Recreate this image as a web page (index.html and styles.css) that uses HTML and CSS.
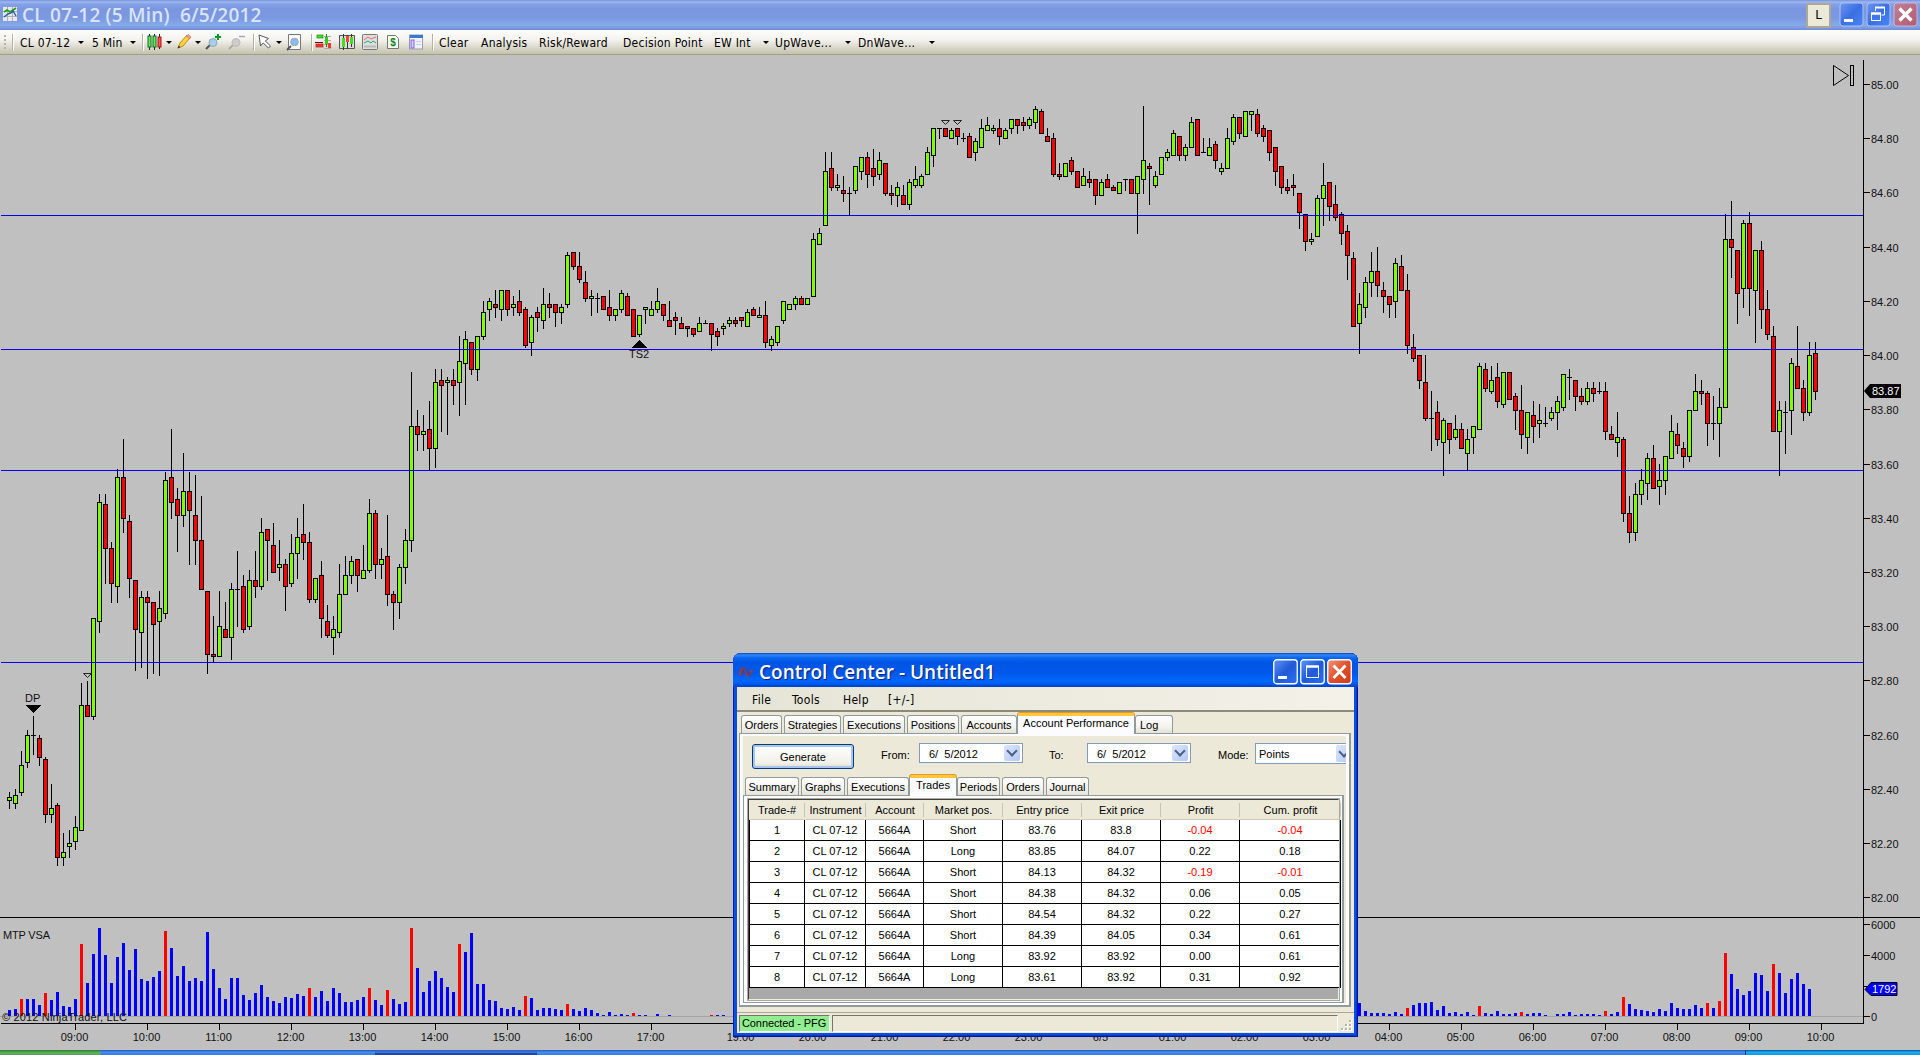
FILE: index.html
```html
<!DOCTYPE html>
<html lang="en">
<head>
<meta charset="utf-8">
<title>CL 07-12 (5 Min)  6/5/2012</title>
<link rel="stylesheet" href="styles.css">
</head>
<body>
<header class="titlebar">
  <svg class="title-icon" width="14" height="14" viewBox="0 0 14 14"><rect width="14" height="14" fill="#e8e8ec"/><path d="M0 4.5h14M0 9.5h14M4.5 0v14M9.5 0v14" stroke="#b0b0b8"/><path d="M1 5l3-2 3 2 3-2 3-2" stroke="#20a010" stroke-width="1.6" fill="none"/><path d="M1 10l4-3 3-1 2-2 3 5" stroke="#2860a0" stroke-width="1.4" fill="none"/></svg>
  <h1 class="title">CL 07-12 (5 Min)&nbsp; 6/5/2012</h1>
  <span class="link-btn">L</span>
  <svg class="caption-btns" width="81" height="26" viewBox="0 0 81 26">
    <defs><linearGradient id="cb" x1="0" y1="0" x2="1" y2="1"><stop offset="0" stop-color="#6f96f0"/><stop offset=".5" stop-color="#3a6fe4"/><stop offset="1" stop-color="#4a86f4"/></linearGradient>
    <linearGradient id="cx" x1="0" y1="0" x2="1" y2="1"><stop offset="0" stop-color="#c08098"/><stop offset="1" stop-color="#b05c70"/></linearGradient></defs>
    <rect x="1" y="1" width="23" height="23" rx="3" fill="url(#cb)" stroke="#a9c2f2"/><rect x="5" y="17" width="9" height="3" fill="#fff"/>
    <rect x="28" y="1" width="23" height="23" rx="3" fill="url(#cb)" stroke="#a9c2f2"/><path d="M36.500 9V5.500h9v7.500h-3" fill="none" stroke="#fff"/><path d="M36 5.500h10" stroke="#fff" stroke-width="2"/><rect x="32.500" y="11.500" width="9" height="7" fill="#4478e8" stroke="#fff"/><path d="M32 11.500h10" stroke="#fff" stroke-width="2.500"/>
    <rect x="55" y="1" width="23" height="23" rx="3" fill="url(#cx)" stroke="#c9b4dc"/><path d="M60.500 6.500l12 12M72.500 6.500l-12 12" stroke="#fff" stroke-width="3.200"/>
  </svg>
</header>
<nav class="toolbar">
  <span class="grip"></span><i class="sep"></i><span>CL 07-12</span><i class="arr"></i><span>5 Min</span><i class="arr"></i><i class="sep"></i>
  <svg width="16" height="16" viewBox="0 0 16 16"><path d="M2.500 0v16M7.500 0v16M12.500 0v15" stroke="#222"/><rect x="1" y="2" width="3" height="11" fill="#6e4" stroke="#163"/><rect x="6" y="2" width="3" height="11" fill="#6e4" stroke="#163"/><rect x="11" y="3" width="3" height="10" fill="#f55" stroke="#a11"/></svg><i class="arr"></i>
  <svg width="16" height="16" viewBox="0 0 16 16"><path d="M2 14l2-5 7-8 3 3-7 8z" fill="#ffd23c" stroke="#c8881a"/><path d="M10.500 2l3 3 1.500-2-2.500-2.500z" fill="#f0a0a0" stroke="#c06060" stroke-width=".6"/><path d="M1.500 14.500l1.200-3 1.800 1.800z" fill="#333"/></svg><i class="arr"></i>
  <svg width="18" height="16" viewBox="0 0 18 16"><path d="M1 15l4-4" stroke="#555" stroke-width="2.200"/><circle cx="8" cy="8.500" r="4" fill="#a9cdf0" stroke="#8aa"/><path d="M10 3h6M13 0v6" stroke="#0a9a2a" stroke-width="2"/></svg>
  <svg width="18" height="16" viewBox="0 0 18 16"><path d="M1 15l4-4" stroke="#aaa" stroke-width="2.200"/><circle cx="8" cy="8.500" r="4" fill="#ccc" stroke="#bbb"/><path d="M11 2.500h6" stroke="#aaa" stroke-width="1.500"/></svg><i class="sep"></i>
  <svg width="15" height="16" viewBox="0 0 15 16"><path d="M1 1l1.500 11 2.700-3 5.300 5 2-2-5.200-5 3.200-2.500z" fill="#fff" stroke="#555"/></svg><i class="arr"></i>
  <svg width="16" height="17" viewBox="0 0 16 17"><path d="M2.500.500h12v15h-12z" fill="#fafafa" stroke="#777"/><path d="M1 16l4-4" stroke="#555" stroke-width="2"/><circle cx="8.500" cy="8" r="3.800" fill="#8dbbe8" stroke="#9ab"/></svg><i class="sep"></i>
  <svg width="17" height="16" viewBox="0 0 17 16"><path d="M9 2.500h7M9 6.500h7M9 10.500h7M9 14.500h7" stroke="#aaa"/><path d="M11.500 0v13" stroke="#181"/><rect x="2" y="1" width="6" height="3" fill="#4d2" stroke="#282" stroke-width=".7"/><path d="M0 8.500h8" stroke="#700"/><rect x="1" y="10" width="7" height="3" fill="#f33" stroke="#a22" stroke-width=".7"/><rect x="10" y="3" width="3" height="7" fill="#3c2"/><rect x="13" y="9" width="3" height="5" fill="#f33"/></svg>
  <svg width="16" height="16" viewBox="0 0 16 16"><path d="M.500 1.500h15v13H.500z" fill="#ddd" stroke="#555"/><path d="M4.500 0v16M8.500 1v14M12.500 0v13" stroke="#333"/><rect x="3" y="4" width="3" height="9" fill="#4d2"/><rect x="7" y="2" width="3" height="6" fill="#f44"/><rect x="11" y="3" width="3" height="7" fill="#4d2"/></svg>
  <svg width="16" height="16" viewBox="0 0 16 16"><rect x=".5" y=".5" width="15" height="15" rx="1" fill="#dedede" stroke="#777"/><path d="M2 12.500h12" stroke="#bbb" stroke-width="2"/><path d="M2 6l4-3 3 2 5-2" stroke="#e66" fill="none"/><path d="M2 9l4-2 3 2 2-2 3 2" stroke="#2a7" fill="none"/></svg>
  <svg width="14" height="16" viewBox="0 0 14 16"><path d="M1.500 1.500h8l3 3v10h-11z" fill="#f4fff4" stroke="#777"/><text x="7" y="12" class="dollar">$</text></svg>
  <svg width="15" height="16" viewBox="0 0 15 16"><rect x=".5" y="1" width="13" height="14" fill="#eef2fb" stroke="#99a"/><rect x="1" y="1" width="13" height="3" fill="#3a78d8"/><rect x="2" y="6" width="3" height="8" fill="#dcc8ff" stroke="#86d"/><path d="M7 7.500h5M7 10.500h5" stroke="#ccd"/></svg><i class="sep"></i>
  <span>Clear</span><span>Analysis</span><span>Risk/Reward</span><span>Decision Point</span><span>EW Int</span><i class="arr"></i><span>UpWave...</span><i class="arr"></i><span>DnWave...</span><i class="arr"></i>
</nav>
<main class="chart"><svg id="chart" width="1920" height="995" viewBox="0 55 1920 995"></svg></main>
<footer class="taskbar"><span class="start"></span><span class="task a"></span><span class="task active"></span><span class="task b"></span><span class="tray"></span></footer>

<section class="window">
  <div class="win-title">
    <svg width="17" height="16" viewBox="0 0 17 16"><path d="M2 11c1-8 5-8 6-3s4 5 6-2" fill="none" stroke="#a33a3a" stroke-width="2.200"/><path d="M4 12c0-8 3-9 5-4s3 4 4 0" fill="none" stroke="#53407a" stroke-width="1.500"/></svg>
    <h2>Control Center - Untitled1</h2>
    <svg width="80" height="26" viewBox="0 0 80 26">
      <defs><linearGradient id="wb" x1="0" y1="0" x2="1" y2="1"><stop offset="0" stop-color="#5f94f4"/><stop offset=".5" stop-color="#2159d8"/><stop offset="1" stop-color="#2b70f0"/></linearGradient><linearGradient id="wx" x1="0" y1="0" x2="1" y2="1"><stop offset="0" stop-color="#f09878"/><stop offset=".5" stop-color="#e0502c"/><stop offset="1" stop-color="#cc3c14"/></linearGradient></defs>
      <rect x=".75" y=".75" width="23.500" height="24" rx="3" fill="url(#wb)" stroke="#fff" stroke-width="1.300"/><rect x="5" y="17" width="9" height="3" fill="#fff"/>
      <rect x="27.750" y=".75" width="23.500" height="24" rx="3" fill="url(#wb)" stroke="#fff" stroke-width="1.300"/><path d="M33.500 7.500h12v11h-12z" fill="none" stroke="#fff"/><path d="M33 7.500h13" stroke="#fff" stroke-width="2.500"/>
      <rect x="54.750" y=".75" width="23.500" height="24" rx="3" fill="url(#wx)" stroke="#fff" stroke-width="1.300"/><path d="M60.500 6.500l12 12.500M72.500 6.500l-12 12.500" stroke="#fff" stroke-width="2.800"/>
    </svg>
  </div>
  <div class="client">
    <div class="menu"><span>File</span><span>Tools</span><span>Help</span><span>[+/-]</span></div>
    <div class="tabs outer"><span>Orders</span><span>Strategies</span><span>Executions</span><span>Positions</span><span>Accounts</span><span class="on">Account Performance</span><span class="last">Log</span></div>
    <div class="page">
      <div class="filters">
        <button class="generate">Generate</button><label>From:</label><span class="field">6/&nbsp; 5/2012<i class="drop"></i></span><label>To:</label><span class="field">6/&nbsp; 5/2012<i class="drop"></i></span><label>Mode:</label><span class="field mode">Points<i class="drop"></i></span>
      </div>
      <div class="tabs inner"><span>Summary</span><span>Graphs</span><span>Executions</span><span class="on">Trades</span><span>Periods</span><span>Orders</span><span>Journal</span></div>
      <div class="subpage"><div class="grid-frame">
        <table>
          <colgroup><col class="c1"><col class="c2"><col class="c3"><col class="c4"><col class="c5"><col class="c6"><col class="c7"><col class="c8"></colgroup>
          <thead><tr><th>Trade-#</th><th>Instrument</th><th>Account</th><th>Market pos.</th><th>Entry price</th><th>Exit price</th><th>Profit</th><th>Cum. profit</th></tr></thead>
          <tbody>
          <tr><td>1</td><td>CL 07-12</td><td>5664A</td><td>Short</td><td>83.76</td><td>83.8</td><td class="neg">-0.04</td><td class="neg">-0.04</td></tr>
          <tr><td>2</td><td>CL 07-12</td><td>5664A</td><td>Long</td><td>83.85</td><td>84.07</td><td>0.22</td><td>0.18</td></tr>
          <tr><td>3</td><td>CL 07-12</td><td>5664A</td><td>Short</td><td>84.13</td><td>84.32</td><td class="neg">-0.19</td><td class="neg">-0.01</td></tr>
          <tr><td>4</td><td>CL 07-12</td><td>5664A</td><td>Short</td><td>84.38</td><td>84.32</td><td>0.06</td><td>0.05</td></tr>
          <tr><td>5</td><td>CL 07-12</td><td>5664A</td><td>Short</td><td>84.54</td><td>84.32</td><td>0.22</td><td>0.27</td></tr>
          <tr><td>6</td><td>CL 07-12</td><td>5664A</td><td>Short</td><td>84.39</td><td>84.05</td><td>0.34</td><td>0.61</td></tr>
          <tr><td>7</td><td>CL 07-12</td><td>5664A</td><td>Long</td><td>83.92</td><td>83.92</td><td>0.00</td><td>0.61</td></tr>
          <tr><td>8</td><td>CL 07-12</td><td>5664A</td><td>Long</td><td>83.61</td><td>83.92</td><td>0.31</td><td>0.92</td></tr>
          </tbody>
        </table>
      </div></div>
    </div>
    <div class="status"><span class="conn">Connected - PFG</span><span class="blank"></span><svg width="14" height="14" viewBox="0 0 14 14"><path d="M9 1h3v3H9zM5 5h3v3H5zM9 5h3v3H9zM1 9h3v3H1zM5 9h3v3H5zM9 9h3v3H9z" fill="#fff"/><path d="M9 1h2v2H9zM5 5h2v2H5zM9 5h2v2H9zM1 9h2v2H1zM5 9h2v2H5zM9 9h2v2H9z" fill="#b8b4a2"/></svg></div>
  </div>
</section>
<script src="chart.js"></script>
</body>
</html>
```
FILE: styles.css
```css
* { box-sizing: border-box; }
html, body { margin: 0; height: 100%; overflow: hidden; }
body { width: 1920px; height: 1055px; display: flex; flex-direction: column; background: #c0c0c0; font: 11px "Liberation Sans", Arial, sans-serif; color: #000; }

.titlebar { height: 30px; flex: none; display: flex; align-items: center; background: linear-gradient(#7590de 0, #9fb8f0 2px, #86a2e6 4px, #7a96df 9px, #7b98e0 18px, #85aae8 25px, #7c9ae2 28px, #6f88d8 30px); }
.title-icon { margin: 0 5px 2px 3px; }
.title { margin: 0; flex: 1; font: 600 19px/28px "Open Sans", sans-serif; color: #d8e4f8; letter-spacing: .2px; white-space: nowrap; }
.link-btn { width: 25px; height: 25px; border: 2px solid #aca899; background: #ece9d8; font: 12px/21px "DejaVu Sans", sans-serif; text-align: center; margin-right: 8px; }
.caption-btns { display: block; }

.toolbar { height: 25px; flex: none; display: grid; align-items: center; background: linear-gradient(#fdfdfb, #f4f3ee 40%, #c4c1ae); border-bottom: 1px solid #a3a17c; font: 12px/22px "DejaVu Sans Condensed", "DejaVu Sans", sans-serif; white-space: nowrap;
  grid-template-columns: 12px 8px 57px 15px 37px 13px 5px 18px 11px 18px 11px 23px 25px 5px 17px 11px 25px 4px 24px 23px 24px 23px 23px 7px 42px 58px 84px 91px 48px 13px 69px 14px 70px 20px; }
.toolbar span { letter-spacing: .25px; padding-top: 2px; }
.toolbar svg { display: block; }
.sep { width: 2px; height: 17px; border-left: 1px solid #b4b1a0; background: #fff; }
.arr { width: 0; border: 3px solid transparent; border-top-color: #000; border-bottom: 0; margin-left: 1px; }
.toolbar .grip { width: 2px; height: 14px; margin-left: 4px; background: repeating-linear-gradient(#b8b5a6 0 2px, transparent 2px 4px); }
.dollar { font: bold 10px "Liberation Sans", sans-serif; fill: #17801f; text-anchor: middle; }

.chart { height: 995px; flex: none; }
.chart svg { display: block; shape-rendering: crispEdges; }
.chart text { font: 11px "Liberation Sans", Arial, sans-serif; fill: #111; }
.chart .mid { text-anchor: middle; }
.chart .inv { fill: #fff; }
.smooth { shape-rendering: auto; }

.taskbar { height: 5px; flex: none; display: flex; background: linear-gradient(#2e64c8 0 1px, #4a90f0 2px, #3578e0); }
.start { width: 101px; background: linear-gradient(#2f7a2f, #62b562 3px, #4aa24a); border-top-right-radius: 4px; }
.task { width: 155px; }
.a { width: 274px; }
.active { width: 162px; background: linear-gradient(#2e64c8 0 1px, #3b80e8 3px, #1c48a8 3px); }
.b { flex: 1; }
.tray { width: 175px; background: linear-gradient(#0c68b8 0 1px, #18b4f0 2px, #1294e8); border-left: 1px solid #0a3c90; }

.window { position: absolute; left: 733px; top: 653px; width: 625px; height: 384px; padding: 0 4px 4px; border-radius: 8px 8px 0 0; background: #0a4fe0; box-shadow: inset 1px 0 #0024a8, inset -1px 0 #00149c, inset -2px 0 #0838c8, inset 0 -1px #00149c, inset 0 -2px #0838c8; }
.win-title { height: 34px; margin: 0 -4px; padding: 3px 5px 0 5px; display: flex; align-items: center; border-radius: 8px 8px 0 0; background: linear-gradient(#0848c0 0, #3088f8 2px, #0864f0 5px, #0054e4 10px, #0058e8 20px, #0066fc 27px, #0060f8 30px, #0040c0 34px); }
.win-title h2 { margin: 0 0 0 4px; flex: 1; font: 600 19px/30px "Open Sans", sans-serif; color: #fff; text-shadow: 1px 1px 1px #0a1f80; white-space: nowrap; }
.client { height: 346px; background: #ece9d8; display: flex; flex-direction: column; }
.menu { height: 25px; flex: none; display: flex; align-items: center; padding: 2px 0 0 15px; background: linear-gradient(90deg, #e5e5d7, #f4f1e8); border-bottom: 2px solid #8d8a7b; font: 12px "DejaVu Sans Condensed", sans-serif; letter-spacing: .3px; }
.menu span { width: 51px; }
.menu span:first-child { width: 40px; }
.menu span:nth-child(3) { width: 45px; }

.tabs { display: flex; align-items: flex-end; flex: none; position: relative; z-index: 1; }
.tabs span { height: 18px; border: 1px solid #919b9c; border-bottom: 0; border-radius: 3px 3px 0 0; background: linear-gradient(#fff, #f4f3ee 60%, #e4e2d8); text-align: center; line-height: 18px; margin-right: 2px; white-space: nowrap; }
.tabs .on { height: 21px; margin: 0 0 -1px -2px; background: #fcfcfe; border-top: 3px solid #ffc73c; line-height: 14px; box-shadow: 0 -1px 0 -0px #e5972d; }
.outer { height: 21px; padding-left: 4px; }
.outer span:nth-child(1) { width: 41px; } .outer span:nth-child(2) { width: 57px; } .outer span:nth-child(3) { width: 62px; } .outer span:nth-child(4) { width: 52px; } .outer span:nth-child(5) { width: 56px; } .outer .on { width: 118px; } .outer .last { width: 38px; text-align: left; padding-left: 4px; }
.inner { height: 21px; padding-left: 2px; }
.inner span:nth-child(1) { width: 54px; } .inner span:nth-child(2) { width: 44px; } .inner span:nth-child(3) { width: 62px; } .inner .on { width: 48px; } .inner span:nth-child(5) { width: 43px; } .inner span:nth-child(6) { width: 42px; } .inner span:nth-child(7) { width: 43px; }
.page { height: 274px; flex: none; margin: 0 3px 0 2px; border: 1px solid #919b9c; border-right-width: 2px; border-bottom-width: 2px; padding: 2px 3px 2px; background: linear-gradient(#ece9d8, #ece9d8) content-box, #fcfcfe; display: flex; flex-direction: column; }
.filters { height: 38px; flex: none; position: relative; display: grid; grid-template-columns: 129px 38px 130px 38px 131px 37px 1fr; align-items: start; padding: 7px 0 0 9px; overflow: hidden; line-height: 20px; }
.filters label { padding-top: 2px; }
.generate { width: 102px; height: 25px; margin-top: 1px; border: 1px solid #003c74; border-radius: 3px; font: 11px "Liberation Sans", sans-serif; background: linear-gradient(#fff, #f1f0e8 80%, #dcd8c8); box-shadow: inset 0 0 0 2px #a9c4f0; padding: 0; }
.field { width: 104px; height: 20px; background: #fff; border: 1px solid #7f9db9; display: flex; justify-content: space-between; padding: 1px 2px 1px 9px; line-height: 18px; }
.mode { padding-left: 3px; width: 100px; height: 21px; }
.drop { width: 16px; border-radius: 2px; background: linear-gradient(135deg, #dce6fc, #b4c8f6); display: grid; place-items: center; }
.drop::before { content: ""; width: 6px; height: 6px; border: solid #4d6185; border-width: 0 2px 2px 0; transform: translateY(-2px) rotate(45deg); }
.subpage { flex: 1; border: 1px solid #919b9c; border-right-width: 2px; background: #fcfcfe; padding: 3px 3px 2px 4px; margin: 0 2px 0 0; }
.grid-frame { height: 100%; background: #a9a9a9; border: 1px solid #404040; border-right-color: #f1efe2; border-bottom-color: #f1efe2; outline: 1px solid #aca899; }
table { border-collapse: separate; border-spacing: 0; table-layout: fixed; width: 592px; }
.c1 { width: 56px; } .c2 { width: 61px; } .c3 { width: 58px; } .c4 { width: 79px; } .c5 { width: 79px; } .c6 { width: 79px; } .c7 { width: 79px; } .c8 { width: 101px; }
th { height: 20px; font-weight: normal; background: linear-gradient(#c8c5b2, #c8c5b2) right center / 1px 14px no-repeat #ece9d8; padding: 0; text-align: center; border-bottom: 1px solid #d0ccb8; white-space: nowrap; }
td { height: 21px; padding: 0; background: #fff; border: solid #000; border-width: 0 1px 1px 0; text-align: center; white-space: nowrap; }
td:first-child { border-left: 1px solid #000; }
.neg { color: #f00; }
.status { flex: 1; margin-top: 5px; border-top: 1px solid #aca899; display: flex; align-items: flex-start; padding: 2px 0 0 2px; gap: 2px; }
.status span { height: 17px; border: 1px solid #fff; border-top-color: #77756a; border-left-color: #77756a; line-height: 15px; }
.conn { width: 91px; background: #90ee90; padding-left: 2px; white-space: nowrap; letter-spacing: -.1px; }
.blank { width: 507px; }
.status svg { margin-top: 4px; }
```
FILE: chart.js
```js
// Candle runs: x of the first centre line, top offset, then
// colour + high,top,bottom,low in thirds of a pixel. Bars are 6px apart.
const runs = [
  [9, 420, `g1116,1131,1143,1167 g1107,1125,1152,1167 g993,1035,1119,1128 g930,945,1029,1044 d888,945,948,1005 r945,954,1014,1038 r1011,1017,1185,1209 g1092,1164,1185,1209 r1149,1155,1314,1338 g1239,1297,1314,1338 g1230,1269,1281,1314 g1188,1221,1266,1290 g789,855,1233,1233 r783,855,891,891 g594,594,891,900 g222,246,606,639 r222,252,387,492 r366,384,492,549 g147,171,501,549 r57,171,297,339 r285,303,477,534 r480,480,630,753 g513,531,639,744 r513,531,549,777 r546,546,615,762 g513,564,606,768 g156,180,582,597 r27,171,249,297 r204,237,288,396 g99,213,288,321 r156,213,273,435 r165,285,363,435 r228,360,510,510 r513,513,705,762 r588,702,711,728 g513,618,711,711 r546,627,654,654 g489,507,654,720 d393,507,510,621 r465,498,630,639 g450,480,621,630 r393,480,501,534 g294,336,501,510 r327,327,363,483 r309,375,459,459 g360,432,444,483 r417,432,501,573 g342,399,492,501 g294,351,402,477 r252,342,369,420 r336,366,540,549 g474,474,540,549 r423,465,597,654 r555,603,648,654 g588,627,654,705`],
  [339, 240, `g972,1062,1179,1194 g948,1005,1065,1065 g948,963,1008,1032 r957,957,1008,1056 g915,990,1017,1017 g777,819,993,999 r810,819,975,1017 g924,957,975,1017 r825,948,1065,1098 r1053,1062,1089,1170 g972,981,1089,1137 g867,900,984,1032 g396,558,903,936 r510,558,585,633 g525,573,585,633 r483,567,627,690 g387,426,627,684 r387,420,438,576 g411,420,429,585 r387,420,438,495 g288,363,429,528 g273,297,372,495 r306,306,390,405 g288,288,390,423 g183,216,291,300 g174,183,210,243 r150,192,204,234 g150,150,210,243 r150,150,210,228 g168,192,204,228 r150,183,219,228 r201,207,318,324 g225,231,309,348 r201,216,234,276 g144,192,243,267 r159,192,204,234 r192,192,219,261 g192,201,219,252 g36,45,195,204 r36,36,81,90 r36,78,120,129 r93,126,177,186 g150,168,177,228 d159,174,177,219 r168,168,210,210 r150,201,228,243 g207,207,228,243 g150,159,210,219 r159,168,228,228 r207,207,291,291`],
  [639, 90, `g675,675,735,741 g651,651,660,702 g633,657,678,678 g594,633,660,669 r642,642,678,693 r633,690,711,711 r666,681,693,735 r681,699,717,717 r708,708,717,741 r714,714,735,741 g681,699,726,726 d690,699,702,702 r699,699,735,783 r714,723,741,768 g699,708,717,735 g681,690,702,711 r681,690,702,711 r681,681,693,711 g657,666,711,711 r651,657,678,678 g651,675,684,684 r633,675,759,774 g738,747,768,783 g708,708,759,768 g633,633,693,702 g642,642,660,660 g618,624,645,660 r618,624,645,645 g624,624,645,645 g429,447,621,621 g414,429,465,465 g186,243,408,408 r186,234,294,303 g252,285,294,303 r258,300,312,336 d291,309,312,376 g228,228,303,312 g201,201,246,270 r186,201,255,294 r177,234,261,288 g186,210,255,270 r219,219,312,318 r285,309,318,345 g276,291,318,351 r285,315,345,345 g267,276,345,360 g228,267,288,294 g252,258,288,294 g171,186,255,255 g114,114,198,231 d114,114,117,147 r114,114,141,141 g114,120,147,147 r114,114,141,165 d129,144,147,156 r129,138,204,204 g144,153,189,213 g87,114,174,174`],
  [987, 90, `g81,105,123,123 g105,114,123,132 r87,114,141,165 g114,120,147,147 g87,87,117,132 r87,87,108,132 r81,96,108,123 g81,87,108,117 g48,57,99,117 r57,63,132,132 r114,138,156,156 r129,144,255,261 r219,252,261,270 g219,219,261,261 r201,210,246,255 r243,243,294,294 g234,258,288,288 r243,267,279,294 r267,267,318,345 g267,276,318,318 r252,267,294,294 r285,291,303,303 g276,276,312,312 d267,267,270,303 r267,267,312,312 g258,258,312,432 g48,210,270,312 r219,228,237,345 g243,258,288,294 g201,201,255,255 g177,186,204,213 g120,129,198,198 r138,138,198,213 g162,171,198,213 g81,96,174,174 r87,87,198,198 d144,186,189,189 g144,171,198,198 r153,162,213,237 g219,234,246,255 g114,144,237,237 g72,81,156,165 r81,81,132,147 g63,63,141,141 g63,63,75,123 r57,72,132,141 r105,114,141,156 r120,120,189,213 r171,171,246,288 r228,228,294,312 r267,291,303,312`],
  [1293, 100, `r222,255,264,288 r279,279,339,387 r342,342,426,453 g399,417,426,435 g285,294,411,411 g189,255,297,378 r246,246,321,363 r255,312,354,363 r336,342,402,435 r375,393,468,540 r456,474,681,681 g579,612,672,762 g531,546,624,654 g456,513,549,591 r441,513,558,591 r546,570,591,639 r588,588,615,654 g474,489,606,654 r465,498,573,573 r522,570,738,762 r702,741,777,786 r765,765,843,867 r765,846,957,963 d873,954,957,1053 r903,936,1020,1038 g954,960,1029,1128 r969,969,1020,1062 g945,987,1014,1020 r969,987,1047,1047 g987,1017,1062,1110 g978,978,1014,1062 g789,798,990,990 r789,807,867,876 g798,840,876,882 r789,831,906,924 g816,816,915,924 r816,816,900,900 r879,888,933,990 r855,930,1005,1047 g936,936,1014,1062 r903,945,981,1029 g912,960,972,1014 d921,969,972,981 g921,936,957,963 g888,903,939,990 g822,822,924,933 d807,831,834,900 r840,840,891,933 r864,888,906,915 g846,864,906,915 r846,864,882,906 d846,873,876,882`],
  [1605, 190, `r576,603,726,750 r708,732,750,750 g666,741,759,801 r741,747,972,996 r918,969,1029,1059 g879,912,1029,1053 g837,870,915,945 g789,804,882,930 r765,804,897,897 g822,870,891,945 g798,798,873,915 g675,723,807,807 r699,732,768,792 r756,774,801,834 g660,660,801,816 g552,603,663,663 r570,603,612,645 r603,609,702,768 d618,699,702,750 g594,651,702,801 g72,147,654,654 r33,147,174,264 r180,180,312,402 g90,99,297,354 r66,99,297,378 g180,180,303,459 r153,180,360,417 r300,357,435,450 r408,438,726,726 g633,660,726,858 d633,666,669,792 g504,519,663,735 r408,528,597,597 r570,594,669,693 g456,495,669,678 r456,489,606,630`]
];
// Volume bar heights in pixels; r marks a red bar.
const volumes = [
  [9, `6 7 r17 17 17 11 r23 16 24 10 9 17 r72 33 62 88 61 33 59 73 46 67 37 35 39 45 r85 68 40 50 35 38 35 84 47 28 17 38 38 21 16 23 31 19 15 13 19 18 22 20 r28 19 25 15 28 23 14 14 16 19 r28 16 11 r26 17 12 14 r88 48 24 35 45 38 29 24 r72 64 83 32 32 16 15 8 7 9 6 r20 18 6 8 8 7 6 r12 7 5 8 6 3 1 4 1 2 1 r3 1 1 0 2 0 1 0 0 0 0 0 0 r1 1 1`],
  [1359, `13 5 3 3 3 2 4 2 r8 11 13 13 14 6 10 3 4 2 4 1 r10 3 2 5 2 2 3 r4 2 3 3 1 0 2 2 4 1 2 2 2 1 r5 2 4 r19 12 7 6 5 4 7 5 13 8 7 7 11 8 r13 8 r15 r63 42 27 21 25 43 41 25 r52 43 23 37 43 32 27`]
];
const out = [];
const rect = (x, y, w, h, f) => out.push(`<rect x="${x}" y="${y}" width="${w}" height="${h}" fill="${f}"/>`);
const text = (x, y, s, c = '', w = 0) => out.push(`<text x="${x}" y="${y}" class="${c}"${w ? ` textLength="${w}"` : ''}>${s}</text>`);

for (const [x0, y0, data] of runs) {
  data.split(' ').forEach((c, i) => {
    const [h, t, b, l] = c.slice(1).split(',').map(v => y0 + Math.round(v / 3));
    const x = x0 + i * 6;
    rect(x, h, 1, l - h, '#000');
    rect(x - 2, t, 5, b - t, '#000');
    if (c[0] !== 'd') rect(x - 1, t + 1, 3, b - t - 2, c[0] === 'g' ? '#7fff00' : '#f00');
  });
}
for (const y of [215, 349, 470, 662]) rect(1, y, 1862, 1, '#00f');

rect(0, 1016, 1863, 1, '#a4a4a4');
for (const [x0, data] of volumes) {
  data.split(' ').forEach((v, i) => {
    const h = +v.replace('r', '');
    if (h) rect(x0 + i * 6 - 1, 1016 - h, 3, h, v[0] === 'r' ? '#f00' : '#00f');
  });
}

rect(0, 917, 1920, 1, '#000');
rect(1, 1023, 1863, 1, '#000');
rect(1863, 60, 1, 964, '#000');
for (let i = 0; i < 16; i++) {
  const y = Math.round(84 + i * 54.22);
  rect(1864, y, 6, 1, '#000');
  text(1871, y + 5, (85 - i * 0.2).toFixed(2));
}
[[924, '6000'], [955, '4000'], [986, ''], [1016, '0']].forEach(([y, s]) => { rect(1864, y, 6, 1, '#000'); text(1871, y + 5, s); });
const hour = (x, s) => { rect(x, 1024, 1, 6, '#000'); text(x - 0.5, 1041, s, 'mid'); };
for (let i = 0; i < 9; i++) hour(75 + 72 * i, String(9 + i).padStart(2, '0') + ':00');
['19:00', '20:00', '21:00', '22:00', '23:00', '6/5', '01:00', '02:00', '03:00', '04:00', '05:00', '06:00', '07:00', '08:00', '09:00', '10:00'].forEach((s, i) => hour(741 + 72 * i, s));

out.push('<path class="smooth" d="M1864 391l6-7h31v14h-31z" fill="#000"/>');
text(1872, 395, '83.87', 'inv');
out.push('<path class="smooth" d="M1865 989.500l6-7h26v13h-26z" fill="#00f" stroke="#000"/>');
text(1872, 993, '1792', 'inv');

text(25, 702, 'DP');
out.push('<path d="M26 705h15l-7.500 8z"/><path d="M632 348h15l-7.500-8z"/>');
text(629, 358, 'TS2');
for (const [x, y] of [[83, 673], [941, 120], [953, 120]]) out.push(`<path class="smooth" d="M${x + .5} ${y + .5}h8l-4 4z" fill="none" stroke="#222"/>`);
text(3, 939, 'MTP VSA', '', 47);
text(2, 1021, '© 2012 NinjaTrader, LLC', '', 125);
out.push('<path class="smooth" d="M1833.500 65.500v20l15-10z" fill="none" stroke="#000"/><path d="M1850.500 65.500h3v20h-3z" fill="none" stroke="#000"/>');
document.getElementById('chart').innerHTML = out.join('');
```
